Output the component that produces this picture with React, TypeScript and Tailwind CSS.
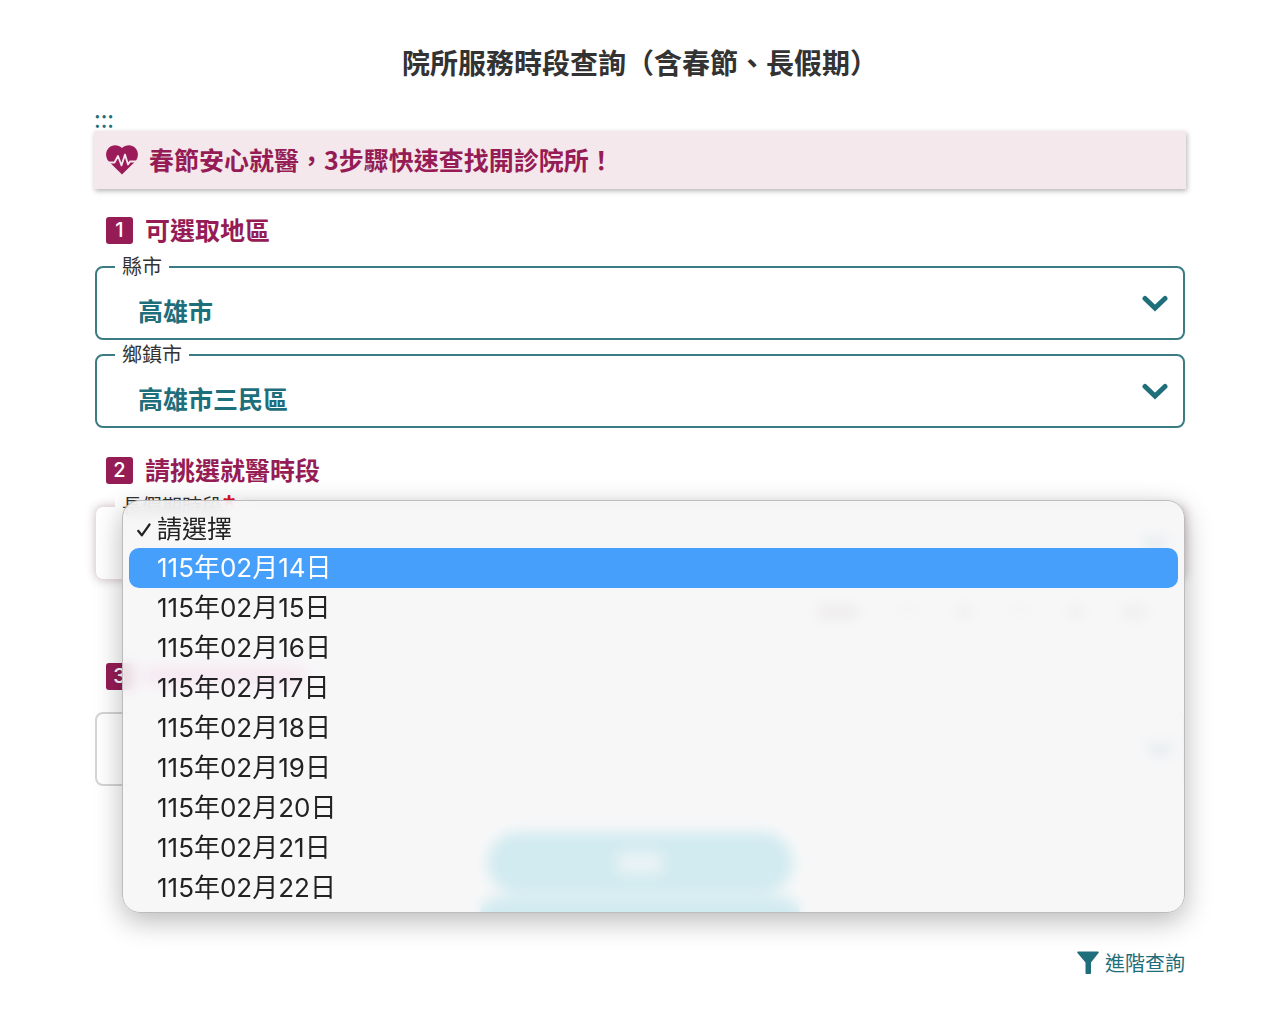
import { useState } from "react";
import type { ReactNode } from "react";

const DATES = [
  "115年02月14日",
  "115年02月15日",
  "115年02月16日",
  "115年02月17日",
  "115年02月18日",
  "115年02月19日",
  "115年02月20日",
  "115年02月21日",
  "115年02月22日",
];

function HeartPulse() {
  return (
    <svg viewBox="0 0 32 30" className="h-[30px] w-8 shrink-0" aria-hidden="true">
      <path
        d="M16 29.5 2.800 16.500C-.8 12.500-.8 6.500 2.700 2.900 6.300-.8 12.300-.4 16 3 19.700-.4 25.700-.8 29.300 2.900c3.500 3.600 3.500 9.600-.1 13.600Z"
        fill="#9b1b5a"
      />
      <path
        d="M2 17.500 8.500 17.500 12 11 15.500 20.500 19 9.500 22 19.500 24 16.500 30 16.500"
        fill="none"
        stroke="#f4e8ec"
        strokeWidth="1.800"
        strokeLinejoin="round"
      />
    </svg>
  );
}

function Chevron() {
  return (
    <svg viewBox="0 0 26 18" className="h-[18px] w-[26px]" aria-hidden="true">
      <path d="M3 4.500 13 14 23 4.500" fill="none" stroke="#1f6e7b" strokeWidth="5" strokeLinecap="round" />
    </svg>
  );
}

function Step({ n, children }: { n: number; children: ReactNode }) {
  return (
    <h2 className="flex h-9 items-center gap-3 pl-3 text-[25px] font-bold text-[#961c55]">
      <span className="flex size-[27px] items-center justify-center rounded-[3px] bg-[#961c55] font-['Inter'] text-[20px] font-medium text-white">
        {n}
      </span>
      {children}
    </h2>
  );
}

function Field({ id, label, value }: { id: string; label: string; value: string }) {
  return (
    <div className="relative mx-px grid items-center rounded-lg border-2 border-[#3b7c84]">
      <label
        htmlFor={id}
        className="absolute -top-[14px] left-[18px] bg-white px-[7px] text-[20px] leading-6 text-[#333]"
      >
        {label}
      </label>
      <select
        id={id}
        className="col-start-1 row-start-1 h-[70px] w-full appearance-none bg-transparent pt-4 pl-[41px] text-[25px] font-bold text-[#1f6e7b] outline-none"
      >
        <option>{value}</option>
      </select>
      <span className="pointer-events-none col-start-1 row-start-1 justify-self-end pr-[15px]">
        <Chevron />
      </span>
    </div>
  );
}

function DateMenu() {
  const [active, setActive] = useState(0);
  return (
    <ul
      role="listbox"
      aria-label="長假期時段"
      className="absolute -top-[6px] right-px left-7 z-10 grid h-[413px] auto-rows-fr rounded-[18px] border border-[#bcbcbc] bg-[#f6f6f7]/85 px-[6px] pt-[7px] pb-[5px] font-['Inter','Noto_Sans_CJK_TC',sans-serif] text-[26px] text-[#222] shadow-[0_8px_28px_rgba(0,0,0,0.28)] backdrop-blur-[7px]"
    >
      <li role="option" aria-selected="true" className="flex items-center gap-[6px] pt-1 pl-2 text-[25px]">
        <svg viewBox="0 0 14 14" className="size-[14px]" aria-hidden="true">
          <path
            d="M1.200 7.800 4.800 12.300 12.500 1.500"
            fill="none"
            stroke="#222"
            strokeWidth="2.200"
            strokeLinecap="round"
            strokeLinejoin="round"
          />
        </svg>
        請選擇
      </li>
      {DATES.map((d, i) => (
        <li
          key={d}
          role="option"
          aria-selected="false"
          onMouseEnter={() => setActive(i)}
          className={
            i === active
              ? "flex items-center rounded-[10px] bg-[#459ffb] pl-7 text-white"
              : "flex items-center pl-7"
          }
        >
          {d}
        </li>
      ))}
    </ul>
  );
}

export default function App() {
  return (
    <main className="bg-white px-[94px] pt-10 pb-10 font-['Noto_Sans_CJK_TC','Noto_Sans',sans-serif]">
      <h1 className="text-center text-[28px] leading-[44px] font-bold text-[#333]">院所服務時段查詢（含春節、長假期）</h1>
      <a href="#main" className="mt-5 block h-[27px] text-[24px] leading-[28px] text-[#1f6e7b]">
        :::
      </a>
      <section id="main">
        <div className="flex h-[58px] items-center gap-[11px] bg-[#f4e8ec] px-3 text-[25px] font-bold text-[#961c55] shadow-[1px_2px_5px_rgba(0,0,0,0.3)]">
          <HeartPulse />
          <p>春節安心就醫，3步驟快速查找開診院所！</p>
        </div>

        <div className="mt-[23px] mb-[18px]">
          <Step n={1}>可選取地區</Step>
        </div>
        <div className="grid gap-[14px]">
          <Field id="city" label="縣市" value="高雄市" />
          <Field id="town" label="鄉鎮市" value="高雄市三民區" />
        </div>

        <div className="mt-6 mb-[18px]">
          <Step n={2}>請挑選就醫時段</Step>
        </div>
        <div className="relative">
          <button
            type="button"
            aria-haspopup="listbox"
            aria-expanded="true"
            aria-labelledby="period-label"
            className="mx-px flex h-[74px] w-[calc(100%-2px)] items-center justify-end rounded-lg border border-[#eadde1] bg-white pr-4 shadow-[0_0_10px_rgba(90,40,50,0.3)]"
          >
            <Chevron />
          </button>
          <span
            id="period-label"
            className="absolute -top-[12px] left-[21px] flex rounded bg-white px-[7px] text-[20px] leading-6 text-[#333]"
          >
            長假期時段<span className="text-[28px] font-bold text-[#e01020]">*</span>
          </span>
          <DateMenu />
        </div>

        <div className="flex h-[78px] items-start justify-end gap-10 pt-[26px] pr-10" aria-hidden="true">
          <div className="h-3 w-10 bg-[#b9a5a8]" />
          <div className="h-2 w-5 bg-[#dddddd]" />
          <div className="h-3 w-3 bg-[#bbbbbb]" />
          <div className="h-2 w-5 bg-[#dddddd]" />
          <div className="h-3 w-3 bg-[#bbbbbb]" />
          <div className="h-3 w-6 bg-[#bbbbbb]" />
        </div>
        <Step n={3}>
          <span className="h-5 w-40 bg-[#f5a0cb]" />
        </Step>
        <div className="mx-px mt-[18px] flex h-[74px] items-center justify-end rounded-lg border-2 border-[#d4d4d4] pr-[10px]">
          <Chevron />
        </div>

        <div className="mt-[46px] flex flex-col items-center gap-[3px]" aria-hidden="true">
          <div className="flex h-[62px] w-[306px] items-center justify-center rounded-full bg-[#07adc8]">
            <div className="h-5 w-11 bg-white/70" />
          </div>
          <div className="h-4 w-[320px] rounded-t-full bg-[#07adc8]" />
        </div>

        <div className="mt-[35px] flex justify-end pr-px">
          <a href="#advanced" className="flex items-center gap-[6px] text-[20px] leading-[30px] text-[#1f6e7b]">
            <svg viewBox="0 0 22 24" className="h-6 w-[22px]" aria-hidden="true">
              <path
                d="M1 .5h20c.8 0 1 .8.5 1.500L14 11.500V22c0 .6-.4 1-1 1H9.500c-.6 0-1-.4-1-1V11.500L.5 2C0 1.300.2.5 1 .5Z"
                fill="#1f6e7b"
              />
            </svg>
            進階查詢
          </a>
        </div>
      </section>
    </main>
  );
}
